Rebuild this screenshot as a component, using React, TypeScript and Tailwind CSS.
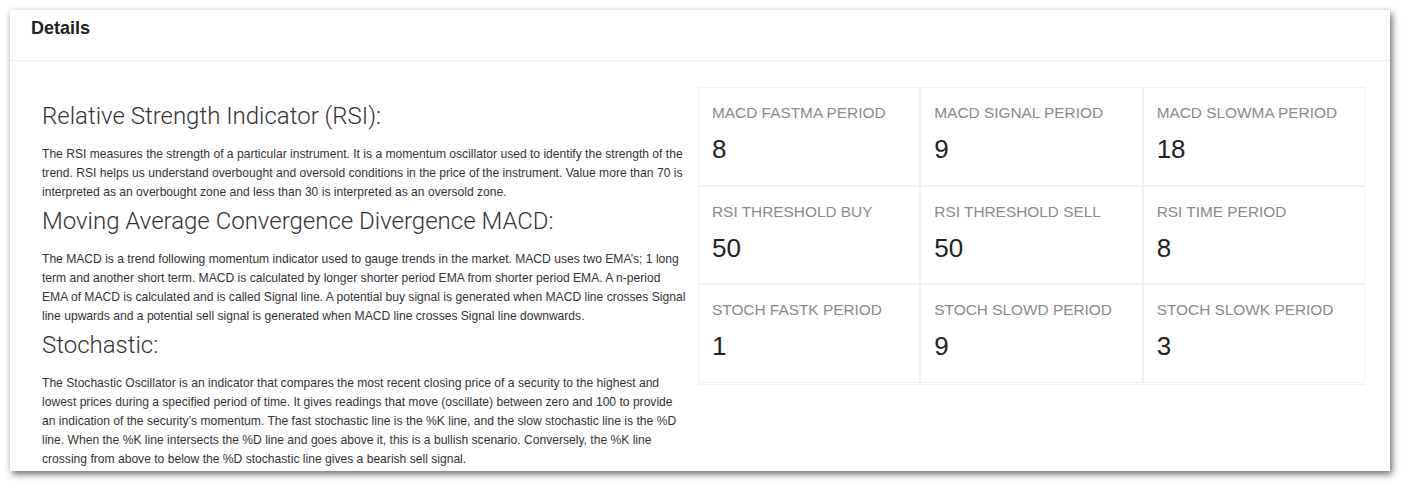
import React from 'react';

// ==================== Data ====================

const sections = [
  {
    title: 'Relative Strength Indicator (RSI):',
    text: 'The RSI measures the strength of a particular instrument. It is a momentum oscillator used to identify the strength of the trend. RSI helps us understand overbought and oversold conditions in the price of the instrument. Value more than 70 is interpreted as an overbought zone and less than 30 is interpreted as an oversold zone.',
  },
  {
    title: 'Moving Average Convergence Divergence MACD:',
    text: 'The MACD is a trend following momentum indicator used to gauge trends in the market. MACD uses two EMA’s; 1 long term and another short term. MACD is calculated by longer shorter period EMA from shorter period EMA. A n-period EMA of MACD is calculated and is called Signal line. A potential buy signal is generated when MACD line crosses Signal line upwards and a potential sell signal is generated when MACD line crosses Signal line downwards.',
  },
  {
    title: 'Stochastic:',
    text: 'The Stochastic Oscillator is an indicator that compares the most recent closing price of a security to the highest and lowest prices during a specified period of time. It gives readings that move (oscillate) between zero and 100 to provide an indication of the security’s momentum. The fast stochastic line is the %K line, and the slow stochastic line is the %D line. When the %K line intersects the %D line and goes above it, this is a bullish scenario. Conversely, the %K line crossing from above to below the %D stochastic line gives a bearish sell signal.',
  },
];

const params = [
  { label: 'MACD FASTMA PERIOD', value: 8 },
  { label: 'MACD SIGNAL PERIOD', value: 9 },
  { label: 'MACD SLOWMA PERIOD', value: 18 },
  { label: 'RSI THRESHOLD BUY', value: 50 },
  { label: 'RSI THRESHOLD SELL', value: 50 },
  { label: 'RSI TIME PERIOD', value: 8 },
  { label: 'STOCH FASTK PERIOD', value: 1 },
  { label: 'STOCH SLOWD PERIOD', value: 9 },
  { label: 'STOCH SLOWK PERIOD', value: 3 },
];

// ==================== Component ====================

export default function App() {
  return (
    <div className="w-[1406px] h-[486px] bg-white p-[10px] font-['Liberation_Sans',Arial,sans-serif]">
      <div className="h-[461px] w-[1380px] bg-white overflow-hidden shadow-[2px_3px_7px_rgba(0,0,0,0.6)]">
        {/* header */}
        <div className="h-[51px] border-b border-[#f0f0f0] pl-[21px] pt-[7px]">
          <h2 className="text-[18px] leading-[22px] font-bold text-[#222]">Details</h2>
        </div>

        {/* body */}
        <div className="flex pl-[32px] pr-[25px]">
          {/* descriptions */}
          <div className="w-[646px] pt-[42px]">
            {sections.map((s, i) => (
              <div key={i} className={i > 0 ? 'mt-[6px]' : ''}>
                <h3 className="text-[24px] leading-[26px] font-light text-[#333] mb-[16px] font-['Roboto',sans-serif]">
                  {s.title}
                </h3>
                <p className="text-[12.1px] leading-[19px] text-[#333]">{s.text}</p>
              </div>
            ))}
          </div>

          {/* parameters */}
          <div className="flex-1 ml-[10px] pt-[26px]">
            <div className="grid grid-cols-3 border-b border-[#f5eff1] pb-px">
              {params.map((p) => (
                <div key={p.label} className="h-[98.5px] border border-[#f5eff1] pl-[13px] pt-[15px]">
                  <div className="text-[15.4px] leading-[20px] text-[#8a8a8a]">{p.label}</div>
                  <div className="mt-[11px] text-[26px] leading-[30px] text-[#222]">{p.value}</div>
                </div>
              ))}
            </div>
          </div>
        </div>
      </div>
    </div>
  );
}
